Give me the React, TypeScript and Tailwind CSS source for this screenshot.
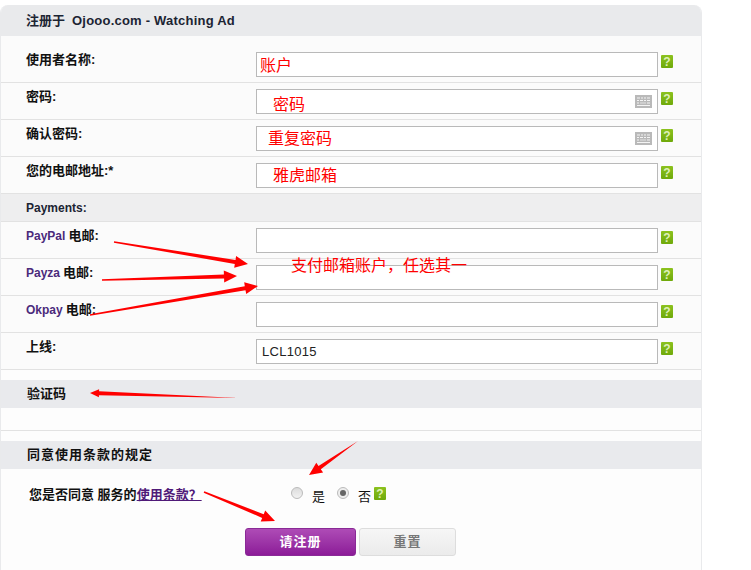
import React from "react";

const cjk = "font-['Liberation_Sans','Noto_Sans_CJK_SC',sans-serif]";

function Help({ className = "" }: { className?: string }) {
  return (
    <span className={`flex h-[13px] w-[12px] shrink-0 items-center justify-center rounded-[1px] bg-gradient-to-b from-[#8cc21e] to-[#6fa90a] text-[12px] leading-none font-bold text-[#dff0b8] ${className}`}>
      ?
    </span>
  );
}

function Keyboard() {
  return (
    <svg width="17" height="13" viewBox="0 0 17 13" className="absolute top-[5px] right-[5px]">
      <rect width="17" height="13" fill="#b9b9b9" />
      <path d="M2 3h3M6 3h2M9 3h2M12 3h3M2 5.500h2M5 5.500h3M9 5.500h2M12 5.500h3M2 8h2M12 8h3M2 10.500h13" stroke="#f4f4f4" strokeWidth="1" fill="none" />
      <path d="M5 8h6" stroke="#e2e2e2" strokeWidth="1" />
    </svg>
  );
}

function Field({ note, noteClass, value, keyboard }: { note?: string; noteClass?: string; value?: string; keyboard?: boolean }) {
  return (
    <div className="flex items-start">
      <div className="relative h-[25px] w-[402px] border border-[#b9b9b9] bg-white">
        {value && <span className="absolute top-[3px] left-[5px] text-[13px] leading-[18px] tracking-[0.3px] text-[#222]">{value}</span>}
        {note && <span className={`absolute text-[16px] leading-[20px] text-[#f00] ${noteClass}`}>{note}</span>}
        {keyboard && <Keyboard />}
      </div>
      <Help className="mt-[3px] ml-[3px]" />
    </div>
  );
}

function Row({ label, children }: { label: React.ReactNode; children: React.ReactNode }) {
  return (
    <div className="flex h-[37px] items-start border-b border-[#e2e2e2] bg-[#fbfbfb] pt-[6px]">
      <div className="w-[255px] pl-[25px] text-[13px] leading-[16px] font-bold text-[#111]">{label}</div>
      <div>{children}</div>
    </div>
  );
}

function Heading({ children, className = "" }: { children: React.ReactNode; className?: string }) {
  return (
    <div className={`flex h-[28px] items-center bg-[#e9eaed] pl-[26px] text-[13px] font-bold text-[#111] ${className}`}>
      {children}
    </div>
  );
}

function Arrow({ x1, y1, x2, y2, w = 4, head = 13, hw = 6, tw = 1.5 }: { x1: number; y1: number; x2: number; y2: number; w?: number; head?: number; hw?: number; tw?: number }) {
  const dx = x2 - x1;
  const dy = y2 - y1;
  const len = Math.hypot(dx, dy);
  const ux = dx / len;
  const uy = dy / len;
  const nx = -uy;
  const ny = ux;
  const bx = x2 - ux * head;
  const by = y2 - uy * head;
  const p = (x: number, y: number) => `${x.toFixed(1)},${y.toFixed(1)}`;
  const points = [
    p(x1 + (nx * tw) / 2, y1 + (ny * tw) / 2),
    p(bx + (nx * w) / 2, by + (ny * w) / 2),
    p(bx + nx * hw, by + ny * hw),
    p(x2, y2),
    p(bx - nx * hw, by - ny * hw),
    p(bx - (nx * w) / 2, by - (ny * w) / 2),
    p(x1 - (nx * tw) / 2, y1 - (ny * tw) / 2),
  ].join(" ");
  return <polygon points={points} fill="#f00" />;
}

const Pay = ({ children }: { children: React.ReactNode }) => (
  <span className="mr-[3px] text-[12px] text-[#4b2a7b]">{children}</span>
);

export default function App() {
  return (
    <div className={`relative h-[570px] w-[751px] overflow-hidden bg-white ${cjk}`}>
      <div className="pt-[5px]">
        <div className="h-[565px] w-[702px] overflow-hidden rounded-t-[8px] border-x border-[#e9eaec] bg-[#fdfdfd]">
          <div className="flex h-[31px] items-center gap-[7px] bg-[#e9eaec] pl-[25px] text-[13px] font-bold text-[#1c2433]">
            <span>注册于</span>
            <span className="tracking-[0.22px]">Ojooo.com - Watching Ad</span>
          </div>
          <div className="h-[10px] bg-[#fbfbfb]" />
          <Row label="使用者名称:">
            <Field note="账户" noteClass="top-[3px] left-[3px]" />
          </Row>
          <Row label="密码:">
            <Field note="密码" noteClass="top-[5px] left-[16px]" keyboard />
          </Row>
          <Row label="确认密码:">
            <Field note="重复密码" noteClass="top-[2px] left-[11px]" keyboard />
          </Row>
          <Row label="您的电邮地址:*">
            <Field note="雅虎邮箱" noteClass="top-[2px] left-[16px]" />
          </Row>
          <div className="flex h-[28px] items-center border-b border-[#e2e2e2] bg-[#eeeeef] pl-[25px] text-[12px] font-bold text-[#1c2433]">
            Payments:
          </div>
          <Row label={<><Pay>PayPal</Pay>电邮:</>}>
            <Field />
          </Row>
          <Row label={<><Pay>Payza</Pay>电邮:</>}>
            <Field />
          </Row>
          <Row label={<><Pay>Okpay</Pay>电邮:</>}>
            <Field />
          </Row>
          <Row label="上线:">
            <Field value="LCL1015" />
          </Row>
          <div className="h-[10px]" />
          <Heading>验证码</Heading>
          <div className="h-[23px] border-b border-[#e2e2e2]" />
          <div className="h-[10px]" />
          <Heading className="tracking-[1px]">同意使用条款的规定</Heading>
          <div className="flex h-[59px] items-start pt-[17px]">
            <div className="mt-[1px] w-[288px] pl-[28px] text-[13px] leading-[16px] font-bold text-[#111]">
              您是否同意 服务的<span className="text-[#4f1a78] underline">使用条款？</span>
            </div>
            <div className="flex items-start text-[13px] leading-[16px] text-[#111]">
              <span className="mt-[1px] ml-[2px] h-[12px] w-[12px] rounded-full border border-[#bbb] bg-gradient-to-b from-[#dcdcdc] to-[#f2f2f2]" />
              <span className="mt-[3px] ml-[9px]">是</span>
              <span className="mt-[1px] ml-[12px] flex h-[12px] w-[12px] items-center justify-center rounded-full border border-[#bbb] bg-[#eee]">
                <span className="h-[6px] w-[6px] rounded-full bg-[#666]" />
              </span>
              <span className="mt-[3px] ml-[9px]">否</span>
              <Help className="mt-[1px] ml-[3px]" />
            </div>
          </div>
          <div className="flex gap-[3px] pl-[244px]">
            <button className="h-[28px] w-[111px] rounded-[3px] border border-[#8a2a96] bg-gradient-to-b from-[#ae4bb6] to-[#8c1a98] text-[13px] font-bold tracking-[1px] text-white">
              请注册
            </button>
            <button className="h-[28px] w-[97px] rounded-[3px] border border-[#dddddd] bg-gradient-to-b from-[#f6f6f6] to-[#ebebeb] text-[13px] font-bold tracking-[1px] text-[#777]">
              重置
            </button>
          </div>
        </div>
      </div>

      <span className="absolute top-[256px] left-[291px] text-[16px] leading-[20px] text-[#f00]">支付邮箱账户，任选其一</span>
      <svg width="751" height="570" viewBox="0 0 751 570" className="pointer-events-none absolute top-0 left-0">
        <Arrow x1={114} y1={242} x2={248} y2={264} />
        <Arrow x1={102} y1={280} x2={237} y2={276} />
        <Arrow x1={90} y1={315} x2={258} y2={286} />
        <Arrow x1={238} y1={398} x2={90} y2={393} head={9} hw={4} tw={0} />
        <Arrow x1={358} y1={441} x2={309} y2={475} tw={0} />
        <Arrow x1={204} y1={492} x2={275} y2={521} />
      </svg>
    </div>
  );
}
